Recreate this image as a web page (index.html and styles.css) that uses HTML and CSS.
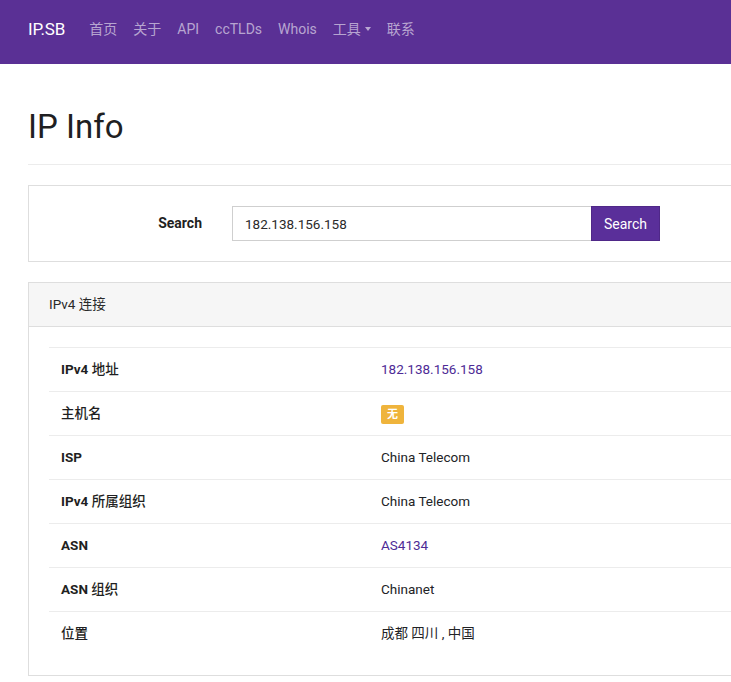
FILE: index.html
```html
<!DOCTYPE html>
<html lang="zh-CN">
<head>
<meta charset="utf-8">
<title>IP Info - IP.SB</title>
<link rel="stylesheet" href="styles.css">
</head>
<body>
<nav class="navbar">
  <div class="navbar-inner">
    <a class="brand" href="#">IP.SB</a>
    <ul class="nav-links">
      <li><a href="#">首页</a></li>
      <li><a href="#">关于</a></li>
      <li><a href="#">API</a></li>
      <li><a href="#">ccTLDs</a></li>
      <li><a href="#">Whois</a></li>
      <li><a href="#" class="dropdown">工具<span class="caret"></span></a></li>
      <li><a href="#">联系</a></li>
    </ul>
  </div>
</nav>

<main class="container">
  <div class="page-header">
    <h1>IP Info</h1>
  </div>

  <section class="card">
    <form class="search-form">
      <label class="search-label" for="q">Search</label>
      <input id="q" class="search-input" type="text" value="182.138.156.158">
      <button class="search-btn" type="button">Search</button>
    </form>
  </section>

  <section class="card info-card">
    <div class="card-header">IPv4 连接</div>
    <div class="card-body">
      <div class="info-table">
        <div class="info-row">
          <div class="info-key">IPv4 <span class="cjk">地址</span></div>
          <div class="info-val"><a href="#" class="link">182.138.156.158</a></div>
        </div>
        <div class="info-row">
          <div class="info-key"><span class="cjk">主机名</span></div>
          <div class="info-val"><span class="badge">无</span></div>
        </div>
        <div class="info-row">
          <div class="info-key">ISP</div>
          <div class="info-val">China Telecom</div>
        </div>
        <div class="info-row">
          <div class="info-key">IPv4 <span class="cjk">所属组织</span></div>
          <div class="info-val">China Telecom</div>
        </div>
        <div class="info-row">
          <div class="info-key">ASN</div>
          <div class="info-val"><a href="#" class="link">AS4134</a></div>
        </div>
        <div class="info-row">
          <div class="info-key">ASN <span class="cjk">组织</span></div>
          <div class="info-val">Chinanet</div>
        </div>
        <div class="info-row">
          <div class="info-key"><span class="cjk">位置</span></div>
          <div class="info-val">成都 四川 , 中国</div>
        </div>
      </div>
    </div>
  </section>
</main>
</body>
</html>
```

FILE: styles.css
```css
html, body {
  overflow-x: hidden;
}

body {
  margin: 0;
  font-family: Roboto, "Noto Sans CJK SC", sans-serif;
  font-size: 13.5px;
  line-height: 1.5;
  color: #222326;
  background: #ffffff;
}

a {
  text-decoration: none;
}

/* Navbar */
.navbar {
  height: 64px;
  background: #5a3095;
}

.navbar-inner {
  height: 59px;
  display: flex;
  align-items: center;
  padding-left: 28px;
}

.brand {
  font-size: 17px;
  line-height: 25px;
  color: #ffffff;
  margin-right: 16px;
  letter-spacing: -0.1px;
}

.nav-links {
  display: flex;
  list-style: none;
  margin: 0;
  padding: 0;
}

.nav-links a {
  display: flex;
  align-items: center;
  padding: 0 8px;
  font-size: 14px;
  line-height: 21px;
  color: rgba(255, 255, 255, 0.58);
}

.caret {
  display: inline-block;
  margin-left: 4px;
  border-top: 4px solid rgba(255, 255, 255, 0.58);
  border-left: 3.5px solid transparent;
  border-right: 3.5px solid transparent;
  margin-top: -1px;
}

/* Container */
.container {
  width: 1140px;
  padding-left: 28px;
}

.page-header {
  margin-top: 43px;
  padding-bottom: 17px;
  border-bottom: 1px solid #ececec;
}

.page-header h1 {
  margin: 0;
  font-size: 33px;
  line-height: 40px;
  font-weight: 400;
  color: #1f1f22;
}

/* Cards */
.card {
  margin-top: 20px;
  border: 1px solid #dedede;
  background: #ffffff;
}

.search-form {
  display: flex;
  align-items: center;
  padding: 20px 0;
  margin: 0;
}

.search-label {
  width: 173px;
  text-align: right;
  font-weight: 700;
  font-size: 14px;
  margin-right: 30px;
  color: #1f1f22;
}

.search-input {
  box-sizing: border-box;
  width: 359px;
  height: 35px;
  padding: 0 12px;
  border: 1px solid #cfcfcf;
  border-right: none;
  border-radius: 0;
  font-family: Roboto, "Noto Sans CJK SC", sans-serif;
  font-size: 13.5px;
  color: #2a2a2a;
  outline: none;
}

.search-btn {
  box-sizing: border-box;
  width: 69px;
  height: 35px;
  border: 1px solid #4f2888;
  border-radius: 0;
  background: #5a2f9a;
  color: #ffffff;
  font-family: Roboto, "Noto Sans CJK SC", sans-serif;
  font-size: 14px;
  padding: 0;
}

.card-header {
  height: 43px;
  line-height: 43px;
  padding: 0 20px;
  background: #f6f6f6;
  border-bottom: 1px solid #dedede;
  color: #2a2a2a;
}

.card-body {
  padding: 20px;
}

.info-row {
  display: flex;
  align-items: center;
  height: 44px;
  box-sizing: border-box;
  border-top: 1px solid #ececec;
}

.info-key {
  width: 296px;
  padding: 0 12px;
  font-weight: 700;
  color: #1f1f22;
}

.info-key .cjk {
  font-weight: 500;
}

.info-val {
  padding: 0 12px;
  color: #222326;
}

.link {
  color: #4e2b96;
}

.badge {
  display: inline-block;
  padding: 4px 6px;
  font-size: 11px;
  line-height: 11px;
  font-weight: 700;
  color: #ffffff;
  background: #efb43c;
  border-radius: 2px;
  vertical-align: middle;
}
```
